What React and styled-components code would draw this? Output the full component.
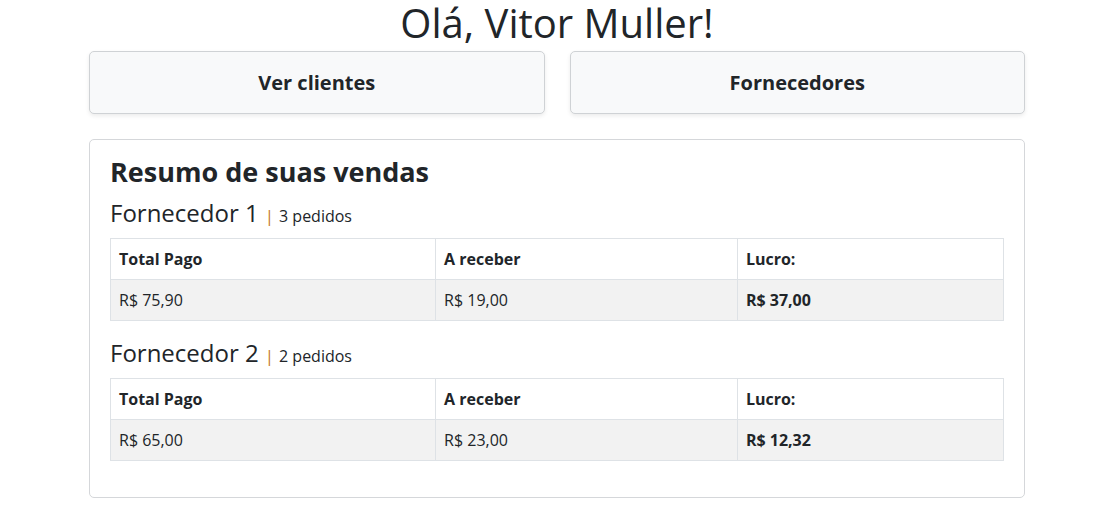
import React from 'react';
import styled, { createGlobalStyle } from 'styled-components';

const Global = createGlobalStyle`
  body {
    margin: 0;
    background: #fff;
    font-family: "Open Sans", "Noto Sans", sans-serif;
    color: #212529;
  }
`;

const Page = styled.div`
  width: 936px;
  margin: 0 0 0 89px;
  padding-bottom: 16px;
`;

const Title = styled.h1`
  margin: -6px 0 0;
  text-align: center;
  font-size: 40px;
  font-weight: 400;
  line-height: 57px;
`;

const Actions = styled.div`
  display: grid;
  grid-template-columns: 1fr 1fr;
  gap: 25px;
`;

const ActionButton = styled.button`
  height: 63px;
  background: #f8f9fa;
  border: 1px solid #cfd2d5;
  border-radius: 5px;
  box-shadow: 0 2px 4px rgba(0, 0, 0, 0.08);
  font-family: inherit;
  font-size: 20px;
  font-weight: 700;
  color: #212529;
  cursor: pointer;
`;

const Card = styled.section`
  margin-top: 25px;
  border: 1px solid #d5d7da;
  border-radius: 5px;
  padding: 13px 20px 20px;
`;

const CardTitle = styled.h2`
  margin: 0 0 5px;
  font-size: 27px;
  font-weight: 700;
  line-height: 38px;
`;

const Supplier = styled.h3`
  margin: 0 0 5px;
  font-size: 24px;
  font-weight: 400;
  line-height: 34px;
`;

const Pipe = styled.span`
  color: #c47a1e;
  font-size: 17px;
  margin: 0 5px 0 6px;
`;

const Count = styled.span`
  font-size: 16px;
`;

const Table = styled.table`
  width: 100%;
  border-collapse: collapse;
  margin-bottom: 15px;
  font-size: 16px;

  &:last-child {
    margin-bottom: 16px;
  }
`;

const Cell = styled.td`
  border: 1px solid #dee2e6;
  padding: 0 8px;
  height: 40px;
  font-weight: ${p => (p.$bold ? 700 : 400)};
  width: ${p => p.$w};
`;

const Row = styled.tr`
  background: ${p => (p.$striped ? '#f2f2f2' : '#fff')};
`;

const vendas = [
  { nome: 'Fornecedor 1', pedidos: 3, pago: 'R$ 75,90', receber: 'R$ 19,00', lucro: 'R$ 37,00' },
  { nome: 'Fornecedor 2', pedidos: 2, pago: 'R$ 65,00', receber: 'R$ 23,00', lucro: 'R$ 12,32' },
];

function Resumo({ item }) {
  return (
    <>
      <Supplier>
        {item.nome}<Pipe>|</Pipe><Count>{item.pedidos} pedidos</Count>
      </Supplier>
      <Table>
        <tbody>
          <Row>
            <Cell $bold $w="36.4%">Total Pago</Cell>
            <Cell $bold $w="33.8%">A receber</Cell>
            <Cell $bold>Lucro:</Cell>
          </Row>
          <Row $striped>
            <Cell>{item.pago}</Cell>
            <Cell>{item.receber}</Cell>
            <Cell $bold>{item.lucro}</Cell>
          </Row>
        </tbody>
      </Table>
    </>
  );
}

export default function App() {
  return (
    <>
      <Global />
      <Page>
        <Title>Olá, Vitor Muller!</Title>
        <Actions>
          <ActionButton>Ver clientes</ActionButton>
          <ActionButton>Fornecedores</ActionButton>
        </Actions>
        <Card>
          <CardTitle>Resumo de suas vendas</CardTitle>
          {vendas.map(v => (
            <Resumo key={v.nome} item={v} />
          ))}
        </Card>
      </Page>
    </>
  );
}
